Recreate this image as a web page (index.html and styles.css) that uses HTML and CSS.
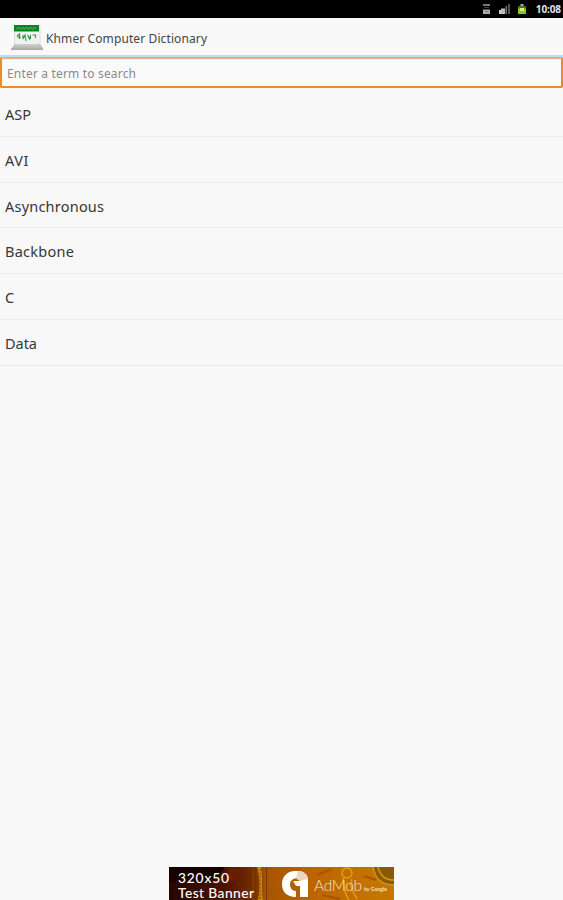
FILE: index.html
```html
<!DOCTYPE html>
<html lang="en">
<head>
<meta charset="utf-8">
<title>Khmer Computer Dictionary</title>
<link rel="stylesheet" href="styles.css">
</head>
<body>
<div class="screen">
  <div class="status">
    <svg class="status-icons" width="48" height="14" viewBox="0 0 48 14">
      <path d="M1 2h7v2H1z" fill="#777"/><path d="M2 5h5v1H2z" fill="#444"/><path d="M1 7.500h7V12H1z" fill="#aaa"/><path d="M3 9h3v1H3z" fill="#888"/>
      <path d="M17 8h2v4h-2z" fill="#ccc"/><path d="M19 6.500h4V12h-4z" fill="#bbb"/><path d="M23.500 4h1.500v8h-1.500z" fill="#777"/><path d="M26 2h2v10h-2z" fill="#555"/>
      <path d="M38.500 2h3v2h-3z" fill="#aaa"/><path d="M36 4h8v8h-8z" fill="#86c90a"/><path d="M36 4h8v2.500h-8z" fill="#4c7418"/><path d="M38 6h4v3h-4z" fill="#d3ee7c"/>
    </svg>
    <span class="clock">10:08</span>
  </div>
  <header class="bar">
    <svg class="logo" width="33" height="26" viewBox="0 0 33 26">
      <path d="M3.500 1H29v19H3.500z" fill="#f0f2f0" stroke="#dcdcdc"/>
      <path d="M3 0h25v6.500H3z" fill="#0b8524"/>
      <path d="M5.500 4l2-1.500 2 1.500 2-1.500 2 1.500 2-1.500 2 1.500 2-1.500 2 1.500 2-1.500 1.500 1" fill="none" stroke="#7fbd88" stroke-width=".9"/>
      <path d="M6 11l2.500-2v5m-2.500-2h4m2-2v4l2-4 1 6m1.500-6l2 4 1-4v4m2-4h3v3" fill="none" stroke="#319947" stroke-width="1.100"/>
      <path d="M4 19h25l3.500 5H0z" fill="#bcbcbc"/><path d="M5 19h23l1 2H4z" fill="#ccc"/><path d="M0 23.500h32V25H0z" fill="#a9a9a9"/>
    </svg>
    <h1 class="title"><svg width="164" height="22"><text x="0" y="15" textLength="161">Khmer Computer Dictionary</text></svg></h1>
  </header>
  <div class="search"><svg width="140" height="22"><text x="0" y="15" textLength="129">Enter a term to search</text></svg></div>
  <ul class="terms">
    <li><svg width="120" height="24"><text x="0" y="17" textLength="26">ASP</text></svg></li>
    <li><svg width="120" height="24"><text x="0" y="17" textLength="23.500">AVI</text></svg></li>
    <li><svg width="120" height="24"><text x="0" y="17" textLength="99">Asynchronous</text></svg></li>
    <li><svg width="120" height="24"><text x="0" y="17" textLength="69">Backbone</text></svg></li>
    <li><svg width="120" height="24"><text x="0" y="17">C</text></svg></li>
    <li><svg width="120" height="24"><text x="0" y="17" textLength="32">Data</text></svg></li>
  </ul>
  <footer class="ad">
    <svg width="225" height="33" viewBox="0 0 225 33">
      <defs>
        <linearGradient id="wood"><stop offset="0" stop-color="#260500"/><stop offset=".25" stop-color="#4b1300"/><stop offset=".38" stop-color="#782e00"/><stop offset=".43" stop-color="#a65500"/><stop offset=".65" stop-color="#bd6500"/><stop offset="1" stop-color="#c57900"/></linearGradient>
      </defs>
      <path d="M0 0h225v33H0z" fill="url(#wood)"/>
      <path d="M0 0h56l-8 12-12 3H0z" fill="#160300"/>
      <path d="M60 1l14 2-5 10-12 2z" fill="#6b1d00"/>
      <path d="M83 0h2v33h-2zM97 0h1v33h-1z" fill="#783b00"/><path d="M88 0c3 9 3 22 1 33h5c-2-10 0-22-2-33z" fill="#c58900"/><path d="M91 2v31" stroke="#7c4800" stroke-dasharray="2 1.500"/>
      <path d="M102 8h12M101 24h15M148 8l15-6M153 28l18 4M195 9l12 4" stroke="#a85400" stroke-width="2"/>
      <g fill="none" stroke="#e2a000" stroke-width="1.500"><circle cx="178" cy="6" r="5"/><path d="M174 11c2 7 0 14 6 22M183 12c-3 8 1 12 5 20"/></g>
      <path d="M204 0c2 13 11 18 21 18V0z" fill="#8c5805"/><path d="M204 0c2 13 11 18 21 18M209 0c2 9 8 13 16 13" fill="none" stroke="#d19a13" stroke-width="1.500"/>
      <path d="M129 4h-3c-8 0-13 6-13 13 0 8 5 13 14 13v-6c-4 0-6-3-6-7 0-3 3-6 8-6z" fill="#fff"/>
      <path d="M129 4c6 0 10 4 10 9v17h-8V14l-4-3z" fill="#fff"/>
      <path d="M129 4c6 0 9 3 10 8l-8 2-4-3z" fill="#ecd5c5"/>
      <path d="M124 14h7v5h-4z" fill="#fff"/>
      <text class="ad-text" x="9" y="15.500" textLength="51">320x50</text>
      <text class="ad-text" x="9" y="31" textLength="76">Test Banner</text>
      <text class="ad-brand" x="145" y="23.500" textLength="48">AdMob</text>
      <text class="ad-by" x="195" y="24" textLength="23">by Google</text>
    </svg>
  </footer>
</div>
</body>
</html>
```
FILE: styles.css
```css
* { box-sizing: border-box; }
body { margin: 0; font-family: "Noto Sans", sans-serif; background: #f8f8f8; }
svg { display: block; overflow: visible; }
.screen { height: 900px; display: flex; flex-direction: column; overflow: hidden; }
.status { height: 18px; flex: none; background: #000; display: flex; justify-content: flex-end; align-items: center; padding-right: 2px; }
.status-icons { margin-right: 4px; }
.clock { width: 27px; font-size: 10px; line-height: 16px; font-weight: 700; letter-spacing: -.1px; color: #e4e4e4; text-align: right; }
.bar { height: 40px; flex: none; display: flex; align-items: flex-start; padding: 7px 0 0 11px; border-bottom: 3px solid #c4dbe4; background: #f9f9f9; }
.title { margin: 3px 0 0 2px; font-weight: 400; font-size: 12px; }
.title text { fill: #444; }
.search { height: 31px; flex: none; border: 2px solid #ef8b22; border-top-color: #e5ad89; border-radius: 2px; padding: 4px 5px 0; font-size: 12px; background: #fafafa; margin-top: -1px; }
.search text { fill: #8a8a8a; }
.terms { list-style: none; margin: 3px 0 0; padding: 0; font-size: 14.5px; }
.terms li { height: 45.75px; padding: 12px 0 0 5px; border-bottom: 1px solid #ebebeb; }
.terms text { fill: #363636; }
.ad { margin: auto auto 0; width: 225px; height: 33px; overflow: hidden; }
.ad-text { font: 500 13.8px Lato, sans-serif; fill: #fff; }
.ad-brand { font: 300 15.5px Lato, sans-serif; fill: #f5e1c4; }
.ad-by { font: 700 5px Lato, sans-serif; fill: #f5e1c4; }
```
